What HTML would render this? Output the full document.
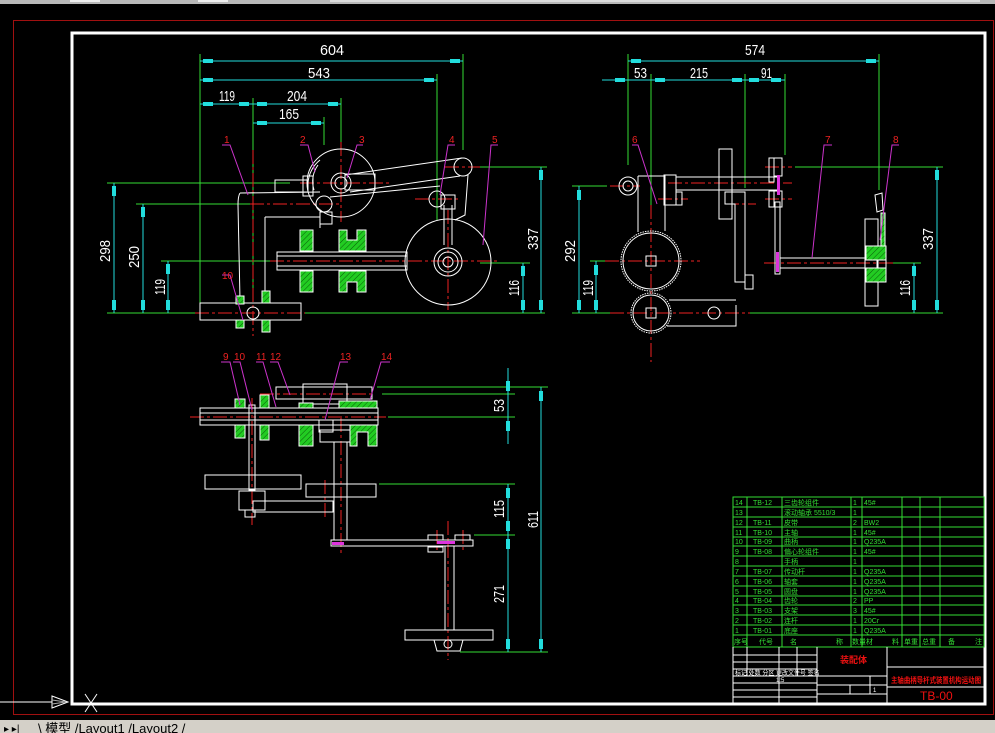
<!DOCTYPE html>
<html><head><meta charset="utf-8"><style>
html,body{margin:0;padding:0;background:#000;width:995px;height:733px;overflow:hidden}
svg{display:block}
text{font-family:"Liberation Sans","Noto Sans CJK SC",sans-serif}
</style></head><body>
<svg width="995" height="733" viewBox="0 0 995 733" xmlns="http://www.w3.org/2000/svg">
<defs>
<pattern id="h" width="4" height="4" patternUnits="userSpaceOnUse" patternTransform="rotate(45)">
<rect width="4" height="4" fill="#22cc22"/><line x1="0" y1="0" x2="0" y2="4" stroke="#0a5a0a" stroke-width="1"/>
</pattern>
</defs>
<rect x="0" y="0" width="995" height="733" fill="#000"/>
<rect x="0" y="0" width="995" height="4" fill="#b8b8b8"/>
<rect x="70" y="0" width="30" height="2" fill="#eee"/><rect x="198" y="0" width="30" height="2" fill="#eee"/><rect x="330" y="0" width="650" height="2" fill="#dcdcdc"/>
<rect x="13.5" y="20.5" width="980" height="694" fill="none" stroke="#a01010" stroke-width="1"/>
<rect x="72" y="33" width="913" height="671" fill="none" stroke="#fff" stroke-width="3"/>
<line x1="0" y1="702" x2="52" y2="702" stroke="#fff"/>
<polygon points="52,696 52,708 68,702" fill="none" stroke="#fff"/>
<line x1="52" y1="700" x2="66" y2="702" stroke="#aaa"/><line x1="52" y1="704" x2="66" y2="702" stroke="#aaa"/>
<line x1="85" y1="694" x2="97" y2="712" stroke="#fff"/><line x1="97" y1="694" x2="85" y2="712" stroke="#fff"/>
<rect x="0" y="720" width="995" height="13" fill="#d4d0c8"/>
<text x="4" y="732" font-size="10" fill="#000">▸ ▸|</text>
<text x="38" y="733" font-size="13" fill="#000">\ 模型 /Layout1 /Layout2 /</text>

<g fill="none" stroke-width="1">
<g stroke="#33dd33">
<line x1="200" y1="54" x2="200" y2="313"/><line x1="253" y1="98" x2="253" y2="300"/>
<line x1="341" y1="98" x2="341" y2="142"/><line x1="324" y1="117" x2="324" y2="145"/>
<line x1="437" y1="74" x2="437" y2="220"/><line x1="463" y1="54" x2="463" y2="150"/>
<line x1="107" y1="183" x2="290" y2="183"/><line x1="136" y1="204" x2="250" y2="204"/>
<line x1="161" y1="261" x2="270" y2="261"/><line x1="107" y1="313" x2="200" y2="313"/>
<line x1="305" y1="313" x2="545" y2="313"/><line x1="478" y1="167" x2="547" y2="167"/>
<line x1="480" y1="263" x2="530" y2="263"/>
</g>
<g stroke="#22dddd">
<line x1="200" y1="61" x2="463" y2="61"/><line x1="200" y1="80" x2="437" y2="80"/>
<line x1="200" y1="104" x2="341" y2="104"/><line x1="253" y1="123" x2="324" y2="123"/>
<line x1="114" y1="183" x2="114" y2="313"/><line x1="143" y1="204" x2="143" y2="313"/>
<line x1="168" y1="261" x2="168" y2="313"/><line x1="541" y1="167" x2="541" y2="313"/>
<line x1="523" y1="263" x2="523" y2="313"/>
</g>
<g fill="#22dddd" stroke="none">
<rect x="203" y="59" width="10" height="4"/><rect x="450" y="59" width="10" height="4"/>
<rect x="203" y="78" width="10" height="4"/><rect x="424" y="78" width="10" height="4"/>
<rect x="203" y="102" width="10" height="4"/><rect x="239" y="102" width="10" height="4"/><rect x="257" y="102" width="10" height="4"/><rect x="328" y="102" width="10" height="4"/>
<rect x="257" y="121" width="10" height="4"/><rect x="311" y="121" width="10" height="4"/>
<rect x="112" y="186" width="4" height="10"/><rect x="112" y="300" width="4" height="10"/>
<rect x="141" y="207" width="4" height="10"/><rect x="141" y="300" width="4" height="10"/>
<rect x="166" y="264" width="4" height="10"/><rect x="166" y="300" width="4" height="10"/>
<rect x="539" y="170" width="4" height="10"/><rect x="539" y="300" width="4" height="10"/>
<rect x="521" y="266" width="4" height="10"/><rect x="521" y="300" width="4" height="10"/>
</g>
<g stroke="#ee2222" stroke-dasharray="14 3 3 3">
<line x1="253" y1="150" x2="253" y2="336"/><line x1="195" y1="313" x2="305" y2="313"/>
<line x1="270" y1="261" x2="500" y2="261"/><line x1="448" y1="210" x2="448" y2="310"/>
<line x1="300" y1="183" x2="390" y2="183"/><line x1="341" y1="142" x2="341" y2="222"/>
<line x1="250" y1="204" x2="340" y2="204"/><line x1="415" y1="199" x2="460" y2="199"/><line x1="445" y1="167" x2="480" y2="167"/>
</g>
<g stroke="#fff">
<circle cx="341" cy="183" r="34"/><circle cx="341" cy="183" r="10"/><circle cx="341" cy="183" r="6"/>
<path d="M308 183 A32 32 0 0 1 320 160"/><path d="M314 190 A28 28 0 0 1 318 165"/>
<circle cx="463" cy="167" r="9"/><circle cx="437" cy="199" r="8"/><circle cx="324" cy="204" r="8"/>
<circle cx="448" cy="262" r="43"/><circle cx="448" cy="262" r="14"/><circle cx="448" cy="262" r="10"/><circle cx="448" cy="262" r="5"/>
<line x1="345" y1="175" x2="462" y2="158"/><line x1="350" y1="192" x2="460" y2="176"/>
<line x1="330" y1="197" x2="440" y2="186"/>
<rect x="345" y="174" width="30" height="16"/>
<rect x="275" y="180" width="33" height="12"/><rect x="303" y="176" width="10" height="20"/>
<line x1="444" y1="205" x2="444" y2="245"/><line x1="452" y1="205" x2="452" y2="245"/>
<rect x="441" y="195" width="14" height="14"/>
<path d="M468 175 L465 215 L455 220"/>
<path d="M240 193 L320 192 M240 193 Q238 196 238 205 L240 300 M265 217 L265 300 M265 217 L320 217 L320 228"/>
<rect x="320" y="212" width="12" height="12"/>
<rect x="277" y="252" width="130" height="18"/>
<line x1="277" y1="256" x2="407" y2="256"/><line x1="277" y1="266" x2="407" y2="266"/>
<rect x="200" y="303" width="101" height="17"/>
<circle cx="253" cy="313" r="6"/>
</g>
<g fill="url(#h)" stroke="#fff">
<rect x="300" y="230" width="13" height="21"/><rect x="300" y="271" width="13" height="21"/>
<path d="M339 230 h8 v10 h10 v-10 h9 v21 h-27z"/><path d="M339 271 h27 v21 h-9 v-10 h-10 v10 h-8z"/>
<rect x="236" y="296" width="8" height="8"/><rect x="236" y="320" width="8" height="8"/>
<rect x="262" y="291" width="8" height="12"/><rect x="262" y="320" width="8" height="12"/>
</g>
<g stroke="#cc33cc">
<polyline points="222,145 230,145 248,195"/><polyline points="300,145 308,145 315,172"/>
<polyline points="363,145 357,145 347,178"/><polyline points="455,145 448,145 440,195"/>
<polyline points="498,145 491,145 483,245"/><polyline points="222,275 230,275 243,320"/>
</g>
<g fill="#ee2222" stroke="none" font-size="10">
<text x="224" y="143">1</text><text x="300" y="143">2</text><text x="359" y="143">3</text>
<text x="449" y="143">4</text><text x="492" y="143">5</text><text x="222" y="279">10</text>
</g>
<g fill="#fff" stroke="none" font-size="15">
<text x="320" y="55" textLength="24" lengthAdjust="spacingAndGlyphs">604</text>
<text x="308" y="78" textLength="22" lengthAdjust="spacingAndGlyphs">543</text>
<text x="219" y="101" textLength="16" lengthAdjust="spacingAndGlyphs">119</text>
<text x="287" y="101" textLength="20" lengthAdjust="spacingAndGlyphs">204</text>
<text x="279" y="119" textLength="20" lengthAdjust="spacingAndGlyphs">165</text>
<text transform="translate(110,262) rotate(-90)" textLength="22" lengthAdjust="spacingAndGlyphs">298</text>
<text transform="translate(139,268) rotate(-90)" textLength="22" lengthAdjust="spacingAndGlyphs">250</text>
<text transform="translate(165,295) rotate(-90)" textLength="16" lengthAdjust="spacingAndGlyphs">119</text>
<text transform="translate(538,250) rotate(-90)" textLength="22" lengthAdjust="spacingAndGlyphs">337</text>
<text transform="translate(519,296) rotate(-90)" textLength="16" lengthAdjust="spacingAndGlyphs">116</text>
</g>

<g stroke="#33dd33">
<line x1="628" y1="54" x2="628" y2="165"/><line x1="651" y1="74" x2="651" y2="210"/>
<line x1="745" y1="74" x2="745" y2="188"/><line x1="785" y1="74" x2="785" y2="155"/>
<line x1="879" y1="54" x2="879" y2="190"/>
<line x1="795" y1="167" x2="943" y2="167"/><line x1="572" y1="186" x2="607" y2="186"/>
<line x1="590" y1="261" x2="610" y2="261"/><line x1="572" y1="313" x2="610" y2="313"/>
<line x1="750" y1="313" x2="943" y2="313"/><line x1="890" y1="263" x2="921" y2="263"/>
</g>
<g stroke="#22dddd">
<line x1="628" y1="61" x2="879" y2="61"/><line x1="602" y1="80" x2="785" y2="80"/>
<line x1="579" y1="186" x2="579" y2="313"/><line x1="596" y1="261" x2="596" y2="313"/>
<line x1="937" y1="167" x2="937" y2="313"/><line x1="914" y1="263" x2="914" y2="313"/>
</g>
<g fill="#22dddd" stroke="none">
<rect x="631" y="59" width="10" height="4"/><rect x="866" y="59" width="10" height="4"/>
<rect x="615" y="78" width="10" height="4"/><rect x="655" y="78" width="10" height="4"/><rect x="732" y="78" width="10" height="4"/><rect x="749" y="78" width="10" height="4"/><rect x="771" y="78" width="10" height="4"/>
<rect x="577" y="190" width="4" height="10"/><rect x="577" y="300" width="4" height="10"/>
<rect x="594" y="265" width="4" height="10"/><rect x="594" y="300" width="4" height="10"/>
<rect x="935" y="170" width="4" height="10"/><rect x="935" y="300" width="4" height="10"/>
<rect x="912" y="266" width="4" height="10"/><rect x="912" y="300" width="4" height="10"/>
</g>
<g stroke="#ee2222" stroke-dasharray="14 3 3 3">
<line x1="651" y1="205" x2="651" y2="362"/><line x1="605" y1="261" x2="700" y2="261"/>
<line x1="610" y1="313" x2="750" y2="313"/><line x1="610" y1="186" x2="640" y2="186"/>
<line x1="668" y1="183" x2="792" y2="183"/><line x1="765" y1="167" x2="792" y2="167"/><line x1="765" y1="199" x2="792" y2="199"/>
<line x1="764" y1="263" x2="893" y2="263"/><line x1="658" y1="199" x2="688" y2="199"/><line x1="725" y1="204" x2="756" y2="204"/>
</g>
<g stroke="#fff">
<circle cx="628" cy="186" r="9"/><circle cx="628" cy="186" r="5"/>
<circle cx="651" cy="261" r="30" stroke-dasharray="1.5 1"/><circle cx="651" cy="261" r="28"/>
<circle cx="651" cy="313" r="20" stroke-dasharray="1.5 1"/><circle cx="651" cy="313" r="18"/>
<path d="M646 256 h10 v10 h-10z"/><path d="M646 308 h10 v10 h-10z"/>
<path d="M638 176 h27 v55 M638 176 v56"/>
<rect x="664" y="175" width="12" height="30"/><rect x="676" y="192" width="6" height="13"/>
<line x1="676" y1="177" x2="780" y2="177"/><line x1="676" y1="190" x2="780" y2="190"/>
<rect x="719" y="149" width="13" height="70"/>
<path d="M725 192 h20 v90 h-10 v-78 h-10z"/>
<rect x="745" y="275" width="8" height="14"/>
<path d="M669 300 L736 300 M667 326 L736 326 L736 305"/>
<circle cx="714" cy="313" r="6"/>
<rect x="769" y="158" width="5" height="24"/><rect x="774" y="158" width="8" height="18"/>
<rect x="769" y="191" width="5" height="16"/><rect x="774" y="191" width="8" height="16"/>
<rect x="775" y="202" width="5" height="72"/>
<line x1="780" y1="258" x2="866" y2="258"/><line x1="780" y1="268" x2="866" y2="268"/>
<rect x="865" y="219" width="13" height="87"/>
<path d="M875 195 L882 193 L883 210 L877 212 Z"/>
<rect x="877" y="250" width="9" height="20"/>
</g>
<g fill="url(#h)" stroke="#fff">
<path d="M866 246 h20 v14 h-20z M866 268 h20 v14 h-20z"/>
<rect x="881" y="213" width="4" height="33"/>
</g>
<g fill="#dd33dd" stroke="none"><rect x="777" y="175" width="3" height="20"/><rect x="776" y="252" width="3" height="20"/></g>
<g stroke="#cc33cc">
<polyline points="632,145 638,145 657,204"/><polyline points="832,145 824,145 812,258"/><polyline points="899,145 892,145 880,240"/>
</g>
<g fill="#ee2222" stroke="none" font-size="10">
<text x="632" y="143">6</text><text x="825" y="143">7</text><text x="893" y="143">8</text>
</g>
<g fill="#fff" stroke="none" font-size="15">
<text x="745" y="55" textLength="20" lengthAdjust="spacingAndGlyphs">574</text>
<text x="634" y="78" textLength="13" lengthAdjust="spacingAndGlyphs">53</text>
<text x="690" y="78" textLength="18" lengthAdjust="spacingAndGlyphs">215</text>
<text x="761" y="78" textLength="11" lengthAdjust="spacingAndGlyphs">91</text>
<text transform="translate(575,262) rotate(-90)" textLength="22" lengthAdjust="spacingAndGlyphs">292</text>
<text transform="translate(593,296) rotate(-90)" textLength="16" lengthAdjust="spacingAndGlyphs">119</text>
<text transform="translate(933,250) rotate(-90)" textLength="22" lengthAdjust="spacingAndGlyphs">337</text>
<text transform="translate(910,296) rotate(-90)" textLength="16" lengthAdjust="spacingAndGlyphs">116</text>
</g>

<g stroke="#33dd33">
<line x1="377" y1="387" x2="548" y2="387"/><line x1="382" y1="394" x2="515" y2="394"/>
<line x1="388" y1="417" x2="515" y2="417"/><line x1="379" y1="484" x2="515" y2="484"/>
<line x1="474" y1="535" x2="515" y2="535"/><line x1="460" y1="652" x2="548" y2="652"/>
</g>
<g stroke="#22dddd"><line x1="508" y1="368" x2="508" y2="444"/><line x1="508" y1="484" x2="508" y2="652"/><line x1="541" y1="387" x2="541" y2="652"/></g>
<g fill="#22dddd" stroke="none">
<rect x="506" y="381" width="4" height="10"/><rect x="506" y="421" width="4" height="10"/>
<rect x="506" y="488" width="4" height="10"/><rect x="506" y="521" width="4" height="10"/><rect x="506" y="539" width="4" height="10"/><rect x="506" y="639" width="4" height="10"/>
<rect x="539" y="391" width="4" height="10"/><rect x="539" y="639" width="4" height="10"/>
</g>
<g stroke="#ee2222" stroke-dasharray="14 3 3 3">
<line x1="190" y1="417" x2="386" y2="417"/><line x1="260" y1="394" x2="375" y2="394"/>
<line x1="252" y1="398" x2="252" y2="525"/><line x1="341" y1="418" x2="341" y2="556"/>
<line x1="325" y1="480" x2="325" y2="520"/><line x1="448" y1="521" x2="448" y2="660"/>
<line x1="437" y1="530" x2="437" y2="553"/><line x1="463" y1="530" x2="463" y2="553"/>
</g>
<g stroke="#fff">
<rect x="200" y="408" width="178" height="17"/><line x1="200" y1="413" x2="378" y2="413"/><line x1="200" y1="420" x2="378" y2="420"/>
<rect x="276" y="387" width="96" height="12"/><rect x="303" y="384" width="44" height="20"/>
<rect x="249" y="405" width="6" height="85"/>
<rect x="205" y="475" width="96" height="14"/><rect x="306" y="484" width="70" height="13"/>
<rect x="239" y="491" width="26" height="19"/><rect x="253" y="501" width="80" height="11"/>
<rect x="245" y="510" width="10" height="7"/>
<rect x="319" y="420" width="14" height="12"/><rect x="320" y="430" width="30" height="12"/>
<rect x="334" y="442" width="13" height="98"/>
<rect x="331" y="540" width="142" height="6"/>
<rect x="428" y="535" width="15" height="5"/><rect x="455" y="535" width="15" height="5"/>
<rect x="428" y="547" width="15" height="5"/>
<rect x="445" y="546" width="9" height="84"/>
<rect x="405" y="630" width="88" height="10"/>
<path d="M434 640 L437 651 L460 651 L463 640"/><circle cx="448" cy="644" r="4"/>
</g>
<g fill="url(#h)" stroke="#fff">
<rect x="235" y="399" width="10" height="9"/><rect x="235" y="425" width="10" height="13"/>
<rect x="260" y="395" width="9" height="13"/><rect x="260" y="425" width="9" height="15"/>
<rect x="299" y="403" width="14" height="5"/><rect x="299" y="425" width="14" height="21"/>
<path d="M339 401 h38 v7 h-38z"/><path d="M350 425 h27 v21 h-9 v-14 h-11 v14 h-7z"/>
</g>
<g fill="#dd33dd" stroke="none"><rect x="332" y="542" width="12" height="3"/><rect x="437" y="541" width="18" height="3"/></g>
<g stroke="#cc33cc">
<polyline points="221,362 230,362 240,405"/><polyline points="233,362 240,362 252,410"/>
<polyline points="256,362 263,362 276,407"/><polyline points="270,362 278,362 290,395"/>
<polyline points="348,362 340,362 325,420"/><polyline points="390,362 381,362 370,400"/>
</g>
<g fill="#ee2222" stroke="none" font-size="10">
<text x="223" y="360">9</text><text x="234" y="360">10</text><text x="256" y="360">11</text><text x="270" y="360">12</text>
<text x="340" y="360">13</text><text x="381" y="360">14</text>
</g>
<g fill="#fff" stroke="none" font-size="15">
<text transform="translate(504,412) rotate(-90)" textLength="13" lengthAdjust="spacingAndGlyphs">53</text>
<text transform="translate(504,518) rotate(-90)" textLength="18" lengthAdjust="spacingAndGlyphs">115</text>
<text transform="translate(504,603) rotate(-90)" textLength="18" lengthAdjust="spacingAndGlyphs">271</text>
<text transform="translate(538,528) rotate(-90)" textLength="17" lengthAdjust="spacingAndGlyphs">611</text>
</g>

<g stroke="#33dd33">
<rect x="733" y="497" width="251" height="150"/>
<line x1="747" y1="497" x2="747" y2="647"/><line x1="782" y1="497" x2="782" y2="647"/>
<line x1="851" y1="497" x2="851" y2="647"/><line x1="862" y1="497" x2="862" y2="647"/>
<line x1="902" y1="497" x2="902" y2="647"/><line x1="920" y1="497" x2="920" y2="647"/>
<line x1="940" y1="497" x2="940" y2="647"/>
<path d="M733 507h251M733 517h251M733 527h251M733 537h251M733 546h251M733 556h251M733 566h251M733 576h251M733 586h251M733 596h251M733 605h251M733 615h251M733 625h251M733 635h251"/>
</g>
<g fill="#33dd33" stroke="none" font-size="7">
<text x="735" y="505">14</text><text x="753" y="505">TB-12</text><text x="784" y="505">三齿轮组件</text><text x="853" y="505">1</text><text x="864" y="505">45#</text>
<text x="735" y="515">13</text><text x="784" y="515">滚动轴承 5510/3</text><text x="853" y="515">1</text>
<text x="735" y="525">12</text><text x="753" y="525">TB-11</text><text x="784" y="525">皮带</text><text x="853" y="525">2</text><text x="864" y="525">BW2</text>
<text x="735" y="535">11</text><text x="753" y="535">TB-10</text><text x="784" y="535">主轴</text><text x="853" y="535">1</text><text x="864" y="535">45#</text>
<text x="735" y="544">10</text><text x="753" y="544">TB-09</text><text x="784" y="544">曲柄</text><text x="853" y="544">1</text><text x="864" y="544">Q235A</text>
<text x="735" y="554">9</text><text x="753" y="554">TB-08</text><text x="784" y="554">偏心轮组件</text><text x="853" y="554">1</text><text x="864" y="554">45#</text>
<text x="735" y="564">8</text><text x="784" y="564">手柄</text><text x="853" y="564">1</text>
<text x="735" y="574">7</text><text x="753" y="574">TB-07</text><text x="784" y="574">传动杆</text><text x="853" y="574">1</text><text x="864" y="574">Q235A</text>
<text x="735" y="584">6</text><text x="753" y="584">TB-06</text><text x="784" y="584">轴套</text><text x="853" y="584">1</text><text x="864" y="584">Q235A</text>
<text x="735" y="594">5</text><text x="753" y="594">TB-05</text><text x="784" y="594">圆盘</text><text x="853" y="594">1</text><text x="864" y="594">Q235A</text>
<text x="735" y="603">4</text><text x="753" y="603">TB-04</text><text x="784" y="603">齿轮</text><text x="853" y="603">2</text><text x="864" y="603">PP</text>
<text x="735" y="613">3</text><text x="753" y="613">TB-03</text><text x="784" y="613">支架</text><text x="853" y="613">3</text><text x="864" y="613">45#</text>
<text x="735" y="623">2</text><text x="753" y="623">TB-02</text><text x="784" y="623">连杆</text><text x="853" y="623">1</text><text x="864" y="623">20Cr</text>
<text x="735" y="633">1</text><text x="753" y="633">TB-01</text><text x="784" y="633">底座</text><text x="853" y="633">1</text><text x="864" y="633">Q235A</text>
<text x="734" y="644">序号</text><text x="759" y="644">代号</text><text x="790" y="644">名</text><text x="836" y="644">称</text><text x="852" y="644">数量</text><text x="866" y="644">材</text><text x="892" y="644">料</text><text x="904" y="644">单重</text><text x="922" y="644">总重</text><text x="948" y="644">备</text><text x="975" y="644">注</text>
</g>
<g stroke="#fff">
<line x1="733" y1="647" x2="733" y2="703"/><line x1="817" y1="647" x2="817" y2="703"/><line x1="887" y1="647" x2="887" y2="703"/>
<line x1="887" y1="667" x2="984" y2="667"/><line x1="887" y1="687" x2="984" y2="687"/>
<line x1="733" y1="655" x2="817" y2="655"/><line x1="733" y1="662" x2="817" y2="662"/><line x1="733" y1="669" x2="817" y2="669"/><line x1="733" y1="676" x2="817" y2="676"/>
<line x1="733" y1="683" x2="817" y2="683"/><line x1="733" y1="690" x2="817" y2="690"/><line x1="733" y1="697" x2="817" y2="697"/>
<line x1="747" y1="647" x2="747" y2="676"/><line x1="779" y1="647" x2="779" y2="703"/><line x1="797" y1="647" x2="797" y2="676"/>
<line x1="817" y1="676" x2="887" y2="676"/><line x1="817" y1="685" x2="887" y2="685"/><line x1="817" y1="694" x2="887" y2="694"/>
<line x1="850" y1="685" x2="850" y2="694"/><line x1="870" y1="676" x2="870" y2="694"/>
</g>
<g fill="#fff" stroke="none" font-size="6"><text x="735" y="675">标记 处数 分区 更改文件号 签名</text><text x="776" y="682">1:5</text><text x="873" y="692">1</text></g>
<text x="840" y="663" font-size="9" fill="#ee1111" font-weight="bold">装配体</text>
<text x="891" y="683" font-size="8" fill="#ee1111" font-weight="bold" textLength="90" lengthAdjust="spacingAndGlyphs">主轴曲柄导杆式装置机构运动图</text>
<text x="920" y="700" font-size="12" fill="#ee1111">TB-00</text>
</g>
</svg>
</body></html>
